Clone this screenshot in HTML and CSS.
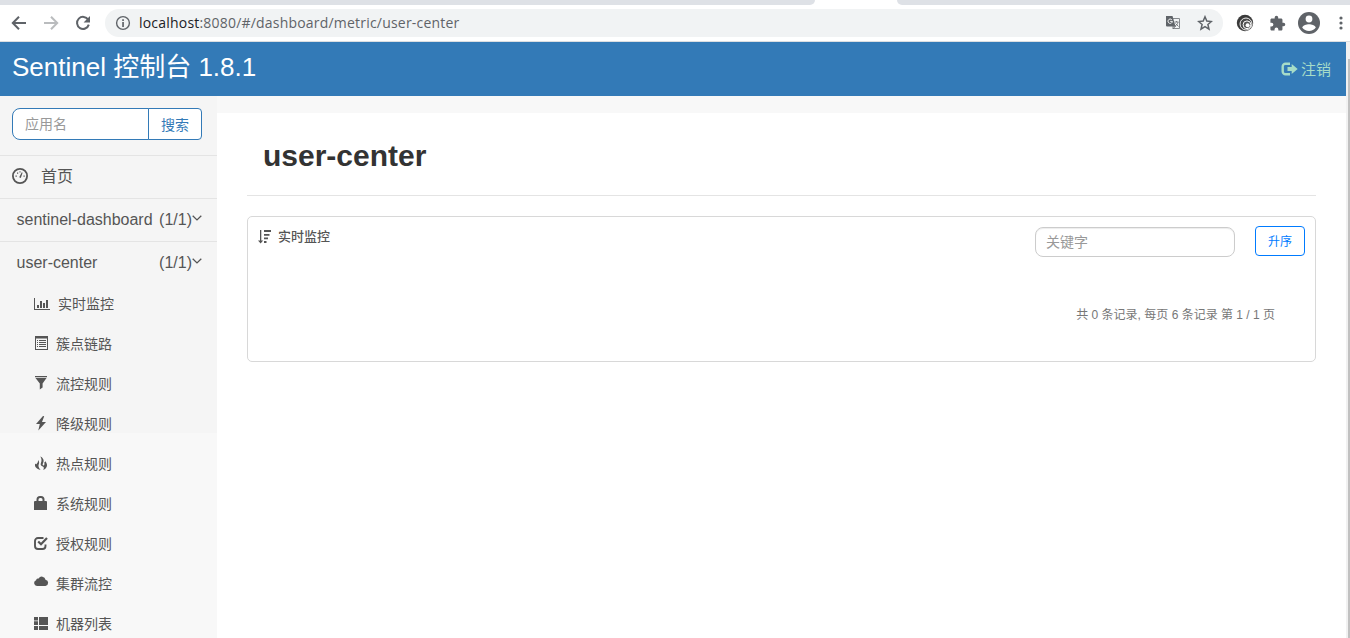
FILE: index.html
```html
<!DOCTYPE html>
<html lang="zh-CN">
<head>
    <meta charset="UTF-8">
    <meta name="viewport" content="width=device-width, initial-scale=1.0">
    <title>Sentinel Dashboard</title>
    <link rel="stylesheet" href="styles.css">
</head>
<body>

    <!-- Browser bar -->
    <div class="tabstrip">
        <div class="tabs-left"></div>
        <div class="tabs-right"></div>
    </div>
    <div class="toolbar">
        <svg class="nav-icon" viewBox="0 0 16 16"><path d="M15 8H2M8 1.8L1.8 8L8 14.2" fill="none" stroke="#5f6368" stroke-width="2"/></svg>
        <svg class="nav-icon" viewBox="0 0 16 16"><path d="M1 8h13M8 1.8L14.2 8L8 14.2" fill="none" stroke="#babcbe" stroke-width="2"/></svg>
        <svg class="nav-icon" viewBox="0 0 16 16"><path d="M13.2 4.8A6 6 0 1 0 13.8 9.6" fill="none" stroke="#5f6368" stroke-width="2"/><path d="M15 1v6.4H8.6z" fill="#5f6368"/></svg>
        <div class="address">
            <svg class="info" viewBox="0 0 16 16"><circle cx="8" cy="8" r="6.4" fill="none" stroke="#5f6368" stroke-width="1.4"/><path d="M7.2 4.2h1.7v1.7H7.2zM7.2 7h1.7v5H7.2z" fill="#5f6368"/></svg>
            <span class="url"><b>localhost</b>:8080/#/dashboard/metric/user-center</span>
            <svg class="translate" viewBox="0 0 16 16"><path d="M6 3.5h8.500v10H8" fill="none" stroke="#85888c"/><path d="M1 1h6.500l3 10.500H2a1 1 0 0 1-1-1z" fill="#5f6368"/><path d="M6.800 4.700A2.200 2.200 0 1 0 7.400 6.400H5.200" fill="none" stroke="#fff" stroke-width=".9"/><path d="M9.500 7h4M11.500 6v1M13 7.200c-.4 1.800-1.400 3-3 4M10.500 8.500l3 3M8 11v3l2.500-3z" fill="none" stroke="#6f7276" stroke-width=".9"/></svg>
            <svg class="star" viewBox="0 0 16 16"><path d="M8 1.800l1.800 4.300 4.600.4-3.500 3 1.100 4.600L8 11.700l-4 2.400 1.100-4.600-3.500-3 4.600-.4z" fill="none" stroke="#5f6368" stroke-width="1.500"/></svg>
        </div>
        <svg class="ext" viewBox="0 0 18 18"><circle cx="9" cy="9" r="8.200" fill="#3a3a3a"/><circle cx="10" cy="10" r="6" fill="#4a4a4a" stroke="#eee" stroke-width="1"/><circle cx="11" cy="10.800" r="3.900" fill="#555" stroke="#fff" stroke-width="1"/><circle cx="11.600" cy="11.300" r="2" fill="#fff"/></svg>
        <svg class="puzzle" viewBox="0 0 24 24"><path fill="#5f6368" d="M20.500 11H19V7c0-1.100-.9-2-2-2h-4V3.500a2.500 2.500 0 0 0-5 0V5H4c-1.100 0-2 .9-2 2v3.800h1.500a2.700 2.700 0 0 1 0 5.400H2V20c0 1.100.9 2 2 2h3.800v-1.500a2.700 2.700 0 0 1 5.400 0V22H17c1.100 0 2-.9 2-2v-4h1.500a2.500 2.500 0 0 0 0-5z"/></svg>
        <svg class="avatar" viewBox="0 0 22 22"><circle cx="11" cy="11" r="11" fill="#5f6368"/><circle cx="11" cy="7" r="3.400" fill="#fff"/><path d="M4.200 15.500C5 13.300 8.500 12.200 11 12.200s6 1.100 6.800 3.300C16.300 17.800 13.800 19 11 19s-5.300-1.200-6.800-3.500z" fill="#fff"/></svg>
        <svg class="dots" viewBox="0 0 4 14"><g fill="#5f6368"><circle cx="2" cy="2" r="1.600"/><circle cx="2" cy="7" r="1.600"/><circle cx="2" cy="12" r="1.600"/></g></svg>
    </div>

    <div class="viewport">
        <div class="page">
            <header class="navbar">
                <span class="brand">Sentinel 控制台 1.8.1</span>
                <a class="logout">
                    <svg viewBox="0 0 17 14"><path d="M9 1.700H4.500A2.800 2.800 0 0 0 1.700 4.500v5a2.800 2.800 0 0 0 2.800 2.800H9" fill="none" stroke="#a6dcc8" stroke-width="2.400"/><path d="M6.500 5h4.200V2l6 5-6 5V9H6.500z" fill="#a6dcc8"/></svg>
                    <span>注销</span>
                </a>
            </header>

            <div class="body">
                <!-- Sidebar -->
                <aside class="sidebar">
                    <div class="search">
                        <input type="text" placeholder="应用名">
                        <button>搜索</button>
                    </div>
                    <a class="home">
                        <svg viewBox="0 0 16 16"><circle cx="8" cy="8" r="7.100" fill="none" stroke="#555" stroke-width="1.800"/><path d="M7.200 9.200L9.800 4.300l.8.400-1.800 5.200zM3.500 7.500h1.300v1.200H3.500zM5 4.500h1.200v1.200H5zM7.500 3.200h1v1.200h-1zM11.500 7.500h1.200v1.200h-1.200z" fill="#555"/></svg>
                        <span>首页</span>
                    </a>
                    <a class="app">
                        <span class="name">sentinel-dashboard</span>
                        <span>(1/1)</span>
                        <svg viewBox="0 0 10 6"><path d="M.7.700l4.300 4.200L9.300.700" fill="none" stroke="#555" stroke-width="1.300"/></svg>
                    </a>
                    <a class="app">
                        <span class="name">user-center</span>
                        <span>(1/1)</span>
                        <svg viewBox="0 0 10 6"><path d="M.7.700l4.300 4.200L9.300.700" fill="none" stroke="#555" stroke-width="1.300"/></svg>
                    </a>
                    <ul class="menu">
                        <li class="first"><svg viewBox="0 0 16 16"><path d="M0 2h1v11h15v1H0zM3 9h2v3H3zM6 5h2v7H6zM9 7h2v5H9zM12 4h2v8h-2z"/></svg><span>实时监控</span></li>
                        <li><svg viewBox="0 0 16 16"><path fill-rule="evenodd" d="M1 0h13v14H1zM2 2.500V13h11V2.500z"/><path d="M3 4h1v1H3zM5 4h7v1H5zM3 6h1v1H3zM5 6h7v1H5zM3 8h1v1H3zM5 8h7v1H5zM3 10h1v1H3zM5 10h7v1H5z"/></svg><span>簇点链路</span></li>
                        <li><svg viewBox="0 0 16 16"><path d="M1 0h12v1.200H1zM1.500 2h11L8.600 7.500v4L5.800 13.500v-6z"/></svg><span>流控规则</span></li>
                        <li><svg viewBox="0 0 16 16"><path d="M9 0L2 8h3.800L4.300 14.500 12 6H8L10.200.2z"/></svg><span>降级规则</span></li>
                        <li><svg viewBox="0 0 16 16"><path d="M6.300.5C9.600 2 10.400 4.800 9 7.200c-.7 1.300-.3 2.200.4 2.200 1.100 0 1.300-1.700.8-3.200.8.100 1-.5.900-1.300 2.900 3 2.700 7-1.900 9.200 1-1.700.8-2.900-.4-3.500-1.600-.7-2.700-1.600-1.900-3.600C7.900 4.800 7.700 2.600 6.300.5z"/><path d="M4 4c1.500 1.800 1.300 3 .7 4.500-.6 1.700 0 3.300 1.900 5.500C2.500 13 .2 10.700 1.200 7.500c.4.700.9 1 1.300.6C3.300 7.200 4.300 6 4 4z"/></svg><span>热点规则</span></li>
                        <li><svg viewBox="0 0 16 16"><path fill-rule="evenodd" d="M0 6a1 1 0 0 1 1-1h1.500V3.500A3.500 3.500 0 0 1 6 0h1a3.500 3.500 0 0 1 3.500 3.500V5H12a1 1 0 0 1 1 1v8H0zM4.500 5h4V3.500A1.500 1.500 0 0 0 7 2H6a1.500 1.500 0 0 0-1.500 1.500z"/></svg><span>系统规则</span></li>
                        <li><svg viewBox="0 0 16 16"><path d="M9.500 2H4a3 3 0 0 0-3 3v5a3 3 0 0 0 3 3h4.500a3 3 0 0 0 3-3V8.500" fill="none" stroke="#555" stroke-width="1.900"/><path d="M4.200 5.500L7 8.300 13 2" fill="none" stroke="#555" stroke-width="2.200"/></svg><span>授权规则</span></li>
                        <li><svg viewBox="0 0 16 16"><path d="M3 10a3 3 0 0 1-.9-5.800A2 2 0 0 1 4.600 2.500a3.700 3.700 0 0 1 6.900 1.200A3.200 3.200 0 0 1 11.500 10z"/></svg><span>集群流控</span></li>
                        <li><svg viewBox="0 0 16 16"><path d="M0 1h4v3.500H0zM5 1h9v8H5zM0 5.200h4V9H0zM0 10h4v4H0zM5 10h9v4H5z"/></svg><span>机器列表</span></li>
                    </ul>
                </aside>

                <!-- Metrics -->
                <main class="content">
                    <h1>user-center</h1>
                    <section class="card">
                        <div class="card-header">
                            <svg class="sort" viewBox="0 0 13 14"><path d="M2 0h1.300v10.500h1.900L2.600 13.500 0 10.500h2zM6 0h7v2H6zM6 4h5.500v1.700H6zM6 7.500h4v1.700H6zM6 11h2.500v2H6z" fill="#555"/></svg>
                            <span class="card-title">实时监控</span>
                            <input type="text" placeholder="关键字">
                            <button>升序</button>
                        </div>
                        <div class="pager">共 0 条记录, 每页 6 条记录 第 1 / 1 页</div>
                    </section>
                </main>
            </div>
        </div>
        <div class="scrollbar"><div class="thumb"></div></div>
    </div>

</body>
</html>
```
FILE: styles.css
```css
* {
    box-sizing: border-box;
}
body {
    margin: 0;
    height: 638px;
    overflow: hidden;
    display: flex;
    flex-direction: column;
    font-family: "Liberation Sans", "Noto Sans CJK SC", sans-serif;
    font-size: 14px;
    color: #555;
    background: #fff;
}
svg {
    display: block;
    flex: none;
}
input, button {
    font-family: inherit;
    margin: 0;
    background: #fff;
}
input::placeholder {
    color: #999;
}

/* browser bar */
.tabstrip {
    height: 5px;
    display: flex;
    justify-content: space-between;
}
.tabs-left, .tabs-right {
    background: #dee1e6;
}
.tabs-left {
    width: 815px;
    border-bottom-right-radius: 6px;
}
.tabs-right {
    width: 453px;
    border-bottom-left-radius: 6px;
}
.toolbar {
    height: 37px;
    display: flex;
    align-items: center;
    padding: 0 6px 0 11px;
    border-bottom: 1px solid #dcdee1;
}
.nav-icon {
    width: 16px;
    height: 16px;
    margin-right: 16px;
}
.address {
    width: 1118px;
    height: 28px;
    margin-left: -2px;
    padding: 0 10px;
    display: flex;
    align-items: center;
    border-radius: 14px;
    background: #f1f3f4;
}
.info, .translate, .star {
    width: 16px;
    height: 16px;
}
.url {
    flex: 1;
    margin-left: 8px;
    padding-bottom: 2px;
    font-family: "Open Sans", sans-serif;
    font-size: 14px;
    letter-spacing: 0.2px;
    color: #5f6368;
    white-space: nowrap;
}
.url b {
    font-weight: normal;
    color: #202124;
}
.star {
    margin-left: 16px;
}
.ext {
    width: 18px;
    height: 18px;
    margin-left: 13px;
}
.puzzle {
    width: 17px;
    height: 17px;
    margin-left: 15px;
}
.avatar {
    width: 22px;
    height: 22px;
    margin-left: 12px;
}
.dots {
    width: 4px;
    height: 14px;
    margin-left: 19px;
}

/* page */
.viewport {
    flex: 1;
    display: flex;
    min-height: 0;
}
.page {
    width: 1346px;
    display: flex;
    flex-direction: column;
}
.scrollbar {
    width: 4px;
    padding: 17px 0 0 2px;
    background: #f1f1f1;
}
.thumb {
    height: 100%;
    background: #c1c1c1;
}
.navbar {
    height: 54px;
    flex: none;
    display: flex;
    justify-content: space-between;
    padding: 0 15px 0 12px;
    background: #337ab7;
}
.brand {
    font-size: 26px;
    line-height: 51px;
    color: #fff;
}
.logout {
    display: flex;
    align-items: center;
    gap: 3px;
    font-size: 15px;
    color: #a6dcc8;
}
.logout svg {
    width: 17px;
    height: 14px;
}
.logout span {
    padding-bottom: 2px;
}
.body {
    flex: 1;
    display: flex;
    min-height: 0;
}

/* sidebar */
.sidebar {
    width: 217px;
    background: linear-gradient(#f5f5f5 337px, #f8f8f8 337px);
}
.search {
    height: 60px;
    display: flex;
    padding: 12px 15px 0 12px;
    border-bottom: 1px solid #e4e4e4;
}
.search input {
    width: 137px;
    height: 32px;
    padding: 0 12px;
    font-size: 14px;
    border: 1px solid #337ab7;
    border-radius: 8px 0 0 8px;
}
.search button {
    width: 54px;
    height: 32px;
    margin-left: -1px;
    padding: 0;
    font-size: 14px;
    color: #337ab7;
    border: 1px solid #337ab7;
    border-radius: 0 4px 4px 0;
}
.home, .app {
    height: 43px;
    display: flex;
    align-items: center;
    font-size: 16px;
    border-bottom: 1px solid #e4e4e4;
}
.home {
    padding: 0 0 2px 12px;
    gap: 13px;
}
.home svg {
    width: 16px;
    height: 16px;
}
.home span {
    padding-bottom: 2px;
}
.app {
    padding: 0 15px 0 16.500px;
}
.app .name {
    flex: 1;
}
.app svg {
    width: 10px;
    height: 6px;
    margin-bottom: 4px;
}
.app:last-of-type {
    height: 42px;
    border-bottom: 0;
}
.menu {
    margin: 0;
    padding: 0;
    list-style: none;
}
.menu li {
    height: 40px;
    display: flex;
    align-items: center;
    gap: 6px;
    padding-left: 34px;
    font-size: 14px;
}
.menu .first {
    gap: 8px;
}
.menu svg {
    width: 16px;
    height: 16px;
    fill: #555;
}
.menu span {
    padding-bottom: 2px;
}

/* content */
.content {
    flex: 1;
    padding: 0 30px;
    border-top: 17px solid #f8f8f8;
}
h1 {
    height: 83px;
    margin: 0 0 20px;
    padding-left: 16px;
    font-size: 30px;
    line-height: 86px;
    color: #333;
    border-bottom: 1px solid #e4e4e4;
}
.card {
    height: 146px;
    border: 1px solid #d8d8d8;
    border-radius: 5px;
}
.card-header {
    display: flex;
    align-items: flex-start;
    padding: 9px 10px 0;
}
.sort {
    width: 13px;
    height: 14px;
    margin-top: 4px;
}
.card-title {
    flex: 1;
    margin-left: 7px;
    font-size: 13px;
    line-height: 21px;
    font-weight: 500;
}
.card input {
    width: 200px;
    height: 30px;
    margin: 1px 20px 0 0;
    padding: 0 10px;
    font-size: 14px;
    border: 1px solid #ccc;
    border-radius: 8px;
    box-shadow: inset 0 1px 1px rgba(0, 0, 0, 0.075);
}
.card button {
    width: 50px;
    height: 30px;
    padding: 0 0 2px;
    font-size: 12px;
    color: #007bff;
    border: 1px solid #007bff;
    border-radius: 4px;
}
.pager {
    margin: 48px 40px 0 0;
    text-align: right;
    font-size: 12px;
    line-height: 20px;
    color: #777;
}
```
